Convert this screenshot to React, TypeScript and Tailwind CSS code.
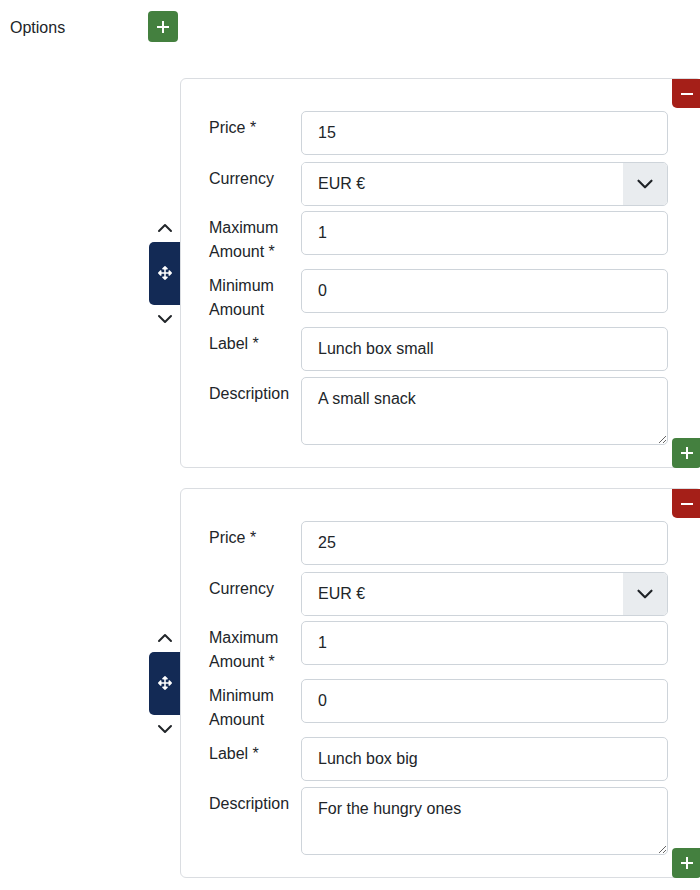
import React from 'react'
import { ChevronUp, ChevronDown } from 'lucide-react'
import { FaArrowsAlt } from 'react-icons/fa'

type Option = {
  price: string
  currency: string
  max: string
  min: string
  label: string
  description: string
}

const options: Option[] = [
  { price: '15', currency: 'EUR €', max: '1', min: '0', label: 'Lunch box small', description: 'A small snack' },
  { price: '25', currency: 'EUR €', max: '1', min: '0', label: 'Lunch box big', description: 'For the hungry ones' },
]

const inputCls =
  'w-full h-[44px] rounded-[5px] border border-[#ced4da] bg-white px-4 text-[16px] text-[#212529] outline-none'

const PlusIcon = () => (
  <svg width="12" height="12" viewBox="0 0 12 12">
    <rect x="5" y="0" width="2" height="12" fill="white" />
    <rect x="0" y="5" width="12" height="2" fill="white" />
  </svg>
)

const Field: React.FC<{ label: React.ReactNode; className?: string; children: React.ReactNode }> = ({
  label,
  className = '',
  children,
}) => (
  <div className={`flex items-start ${className}`}>
    <label className="w-[92px] shrink-0 pt-[5px] leading-[24px]">{label}</label>
    <div className="flex-1">{children}</div>
  </div>
)

const OptionCard: React.FC<{ option: Option }> = ({ option }) => (
  <div className="flex items-center">
    <div className="flex w-[31px] shrink-0 flex-col items-center">
      <ChevronUp size={24} strokeWidth={2} className="text-[#212529]" />
      <div className="mt-[2px] flex h-[63px] w-[31px] items-center justify-center rounded-l-[5px] bg-[#132a55] text-white">
        <FaArrowsAlt size={14} />
      </div>
      <ChevronDown size={24} strokeWidth={2} className="mt-[2px] text-[#212529]" />
    </div>
    <div className="relative w-[522px] shrink-0 rounded-[6px] border border-[#dadde1] bg-white pl-[28px] pr-[33px] pt-[32px] pb-[22px]">
      <button className="absolute right-0 top-0 flex h-[29px] w-[29px] items-center justify-center rounded-bl-[5px] bg-[#a51f18]">
        <svg width="12" height="12" viewBox="0 0 12 12">
          <rect x="0" y="5" width="12" height="2" fill="white" />
        </svg>
      </button>
      <Field label="Price *">
        <input className={inputCls} defaultValue={option.price} />
      </Field>
      <Field label="Currency" className="mt-[7px]">
        <div className="flex h-[44px] w-full overflow-hidden rounded-[5px] border border-[#ced4da]">
          <div className="flex flex-1 items-center bg-white px-4">{option.currency}</div>
          <div className="flex w-[44px] items-center justify-center bg-[#e9ecef]">
            <ChevronDown size={26} strokeWidth={2} className="text-[#212529]" />
          </div>
        </div>
      </Field>
      <Field label="Maximum Amount *" className="mt-[5px]">
        <input className={inputCls} defaultValue={option.max} />
      </Field>
      <Field label="Minimum Amount" className="mt-[5px]">
        <input className={inputCls} defaultValue={option.min} />
      </Field>
      <Field label="Label *" className="mt-[5px]">
        <input className={inputCls} defaultValue={option.label} />
      </Field>
      <Field label="Description" className="mt-[6px]">
        <textarea
          className="block h-[68px] w-full rounded-[5px] border border-[#ced4da] bg-white px-4 py-[9px] text-[16px] leading-[24px] text-[#212529] outline-none"
          defaultValue={option.description}
        />
      </Field>
      <button className="absolute bottom-[-1px] right-0 flex h-[30px] w-[29px] items-center justify-center rounded-[4px] rounded-tr-none bg-[#44803f]">
        <PlusIcon />
      </button>
    </div>
  </div>
)

export default function App() {
  return (
    <div
      className="w-[700px] overflow-hidden bg-white pb-[12px] text-[16px] text-[#212529]"
      style={{ fontFamily: '"Liberation Sans", Arial, sans-serif' }}
    >
      <div className="flex items-center pl-[10px] pt-[11px]">
        <span className="mt-[2px] w-[138px]">Options</span>
        <button className="flex h-[31px] w-[30px] items-center justify-center rounded-[4px] bg-[#44803f]">
          <PlusIcon />
        </button>
      </div>
      <div className="mt-[36px] flex flex-col gap-[20px] pl-[149px]">
        {options.map((o, i) => (
          <OptionCard key={i} option={o} />
        ))}
      </div>
    </div>
  )
}
